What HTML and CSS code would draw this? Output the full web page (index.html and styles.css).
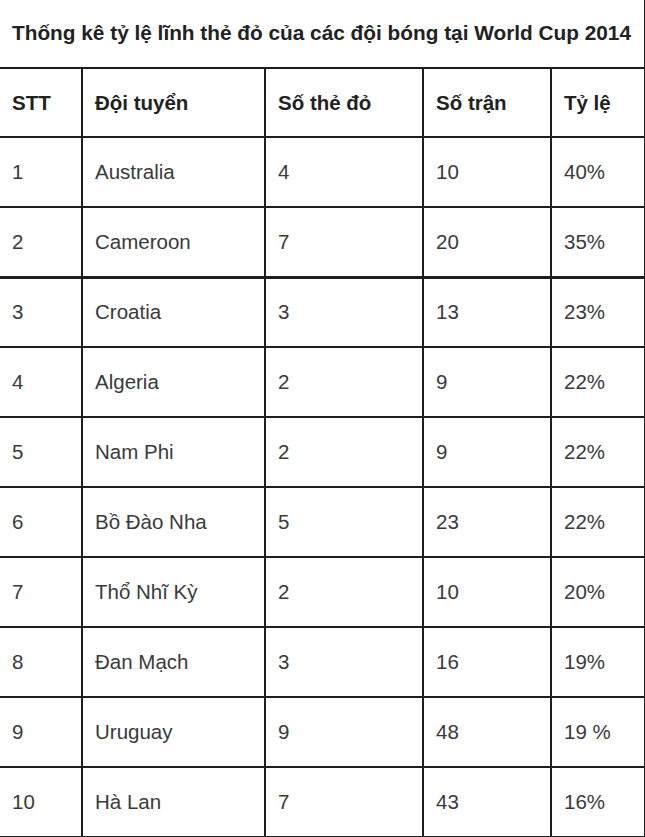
FILE: index.html
```html
<!DOCTYPE html>
<html lang="vi">
<head>
<meta charset="utf-8">
<link rel="stylesheet" href="styles.css">
</head>
<body>
<table class="stats">
  <colgroup>
    <col class="c1"><col class="c2"><col class="c3"><col class="c4"><col class="c5">
  </colgroup>
  <tr class="title-row"><td colspan="5">Thống kê tỷ lệ lĩnh thẻ đỏ của các đội bóng tại World Cup 2014</td></tr>
  <tr class="head"><td>STT</td><td>Đội tuyển</td><td>Số thẻ đỏ</td><td>Số trận</td><td>Tỷ lệ</td></tr>
  <tr><td>1</td><td>Australia</td><td>4</td><td>10</td><td>40%</td></tr>
  <tr><td>2</td><td>Cameroon</td><td>7</td><td>20</td><td>35%</td></tr>
  <tr class="thick"><td>3</td><td>Croatia</td><td>3</td><td>13</td><td>23%</td></tr>
  <tr><td>4</td><td>Algeria</td><td>2</td><td>9</td><td>22%</td></tr>
  <tr><td>5</td><td>Nam Phi</td><td>2</td><td>9</td><td>22%</td></tr>
  <tr><td>6</td><td>Bồ Đào Nha</td><td>5</td><td>23</td><td>22%</td></tr>
  <tr><td>7</td><td>Thổ Nhĩ Kỳ</td><td>2</td><td>10</td><td>20%</td></tr>
  <tr><td>8</td><td>Đan Mạch</td><td>3</td><td>16</td><td>19%</td></tr>
  <tr><td>9</td><td>Uruguay</td><td>9</td><td>48</td><td>19 %</td></tr>
  <tr><td>10</td><td>Hà Lan</td><td>7</td><td>43</td><td>16%</td></tr>
</table>
</body>
</html>
```
FILE: styles.css
```css
html, body {
  margin: 0;
  padding: 0;
  background: #fff;
  overflow: hidden;
}
.stats {
  border-collapse: collapse;
  table-layout: fixed;
  width: 647px;
  margin: -2px 0 0 -3px;
  font-family: "Liberation Sans", Arial, sans-serif;
  font-size: 20.5px;
  color: #3a3a3a;
}
.c1 { width: 84px; }
.c2 { width: 183px; }
.c3 { width: 158px; }
.c4 { width: 128px; }
.c5 { width: 94px; }
.stats td {
  border: 2px solid #1e1e1e;
  height: 70px;
  padding: 0 0 0 12px;
  box-sizing: border-box;
  vertical-align: middle;
}
.stats tr td:first-child { padding-left: 13px; }
.stats tr.thick td { border-top-width: 3px; }
.title-row td {
  height: 69px;
  font-weight: bold;
  color: #222;
  font-size: 20.8px;
  padding-left: 14px;
  padding-bottom: 2px;
}
.head td {
  height: 69px;
  font-weight: bold;
  color: #222;
}
```
